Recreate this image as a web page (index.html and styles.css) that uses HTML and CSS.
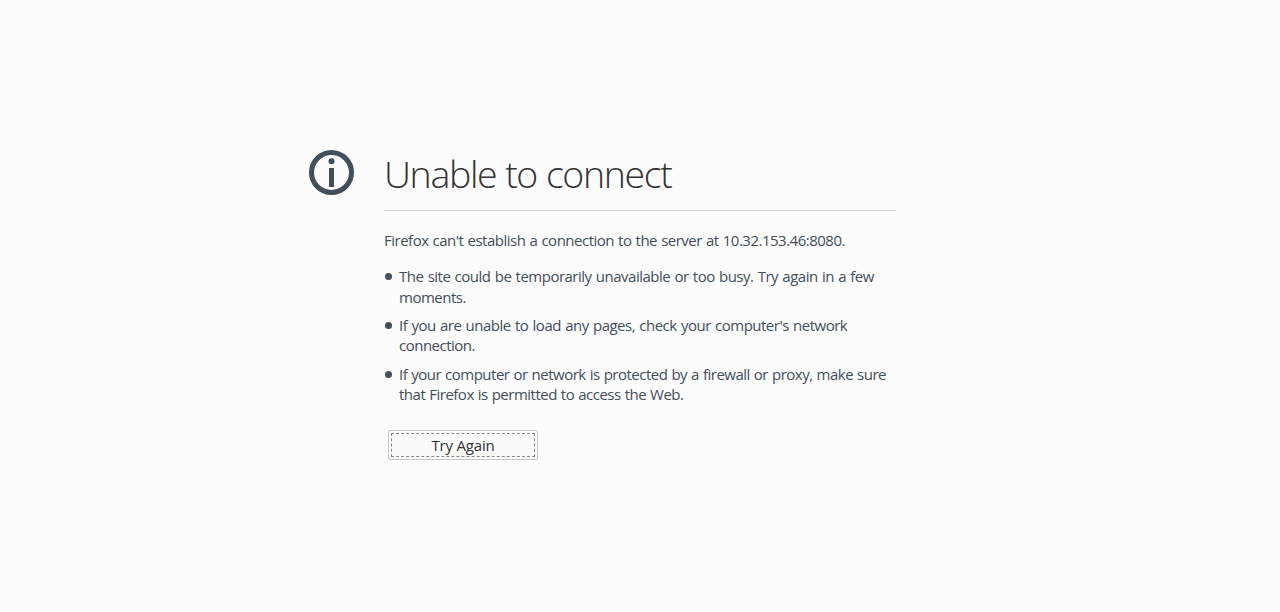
FILE: index.html
```html
<!DOCTYPE html>
<html lang="en">
<head>
<meta charset="utf-8">
<title>Problem loading page</title>
<link rel="stylesheet" href="styles.css">
</head>
<body>
<main class="container">
  <svg class="info-icon" viewBox="0 0 46 46" aria-hidden="true">
    <circle cx="23.5" cy="22.5" r="20" fill="none" stroke="currentColor" stroke-width="5"/>
    <circle cx="23.5" cy="11.3" r="3" fill="currentColor"/>
    <rect x="21" y="18" width="5" height="19" fill="currentColor"/>
  </svg>
  <div class="content">
    <h1 class="title">Unable to connect</h1>
    <p class="description">Firefox can't establish a connection to the server at 10.32.153.46:8080.</p>
    <ul class="hints">
      <li class="hint hint-site">The site could be temporarily unavailable or too busy. Try again in a few<br>moments.</li>
      <li class="hint hint-network">If you are unable to load any pages, check your computer's network<br>connection.</li>
      <li class="hint">If your computer or network is protected by a firewall or proxy, make sure<br>that Firefox is permitted to access the Web.</li>
    </ul>
    <button class="retry" type="button"><span class="retry-label">Try Again</span></button>
  </div>
</main>
</body>
</html>
```
FILE: styles.css
```css
body {
  margin: 0;
  min-height: 612px;
  background: #fcfcfc;
  color: #424e5a;
  font: 15px/20.4px "Open Sans", "Noto Sans", sans-serif;
}
.container {
  display: flex;
  width: 588px;
  padding: 150px 0 0 308px;
}
.info-icon {
  flex: none;
  width: 46px;
  height: 46px;
  margin-right: 30px;
}
.content { width: 512px; }
.title {
  margin: 0;
  height: 60px;
  border-bottom: 1px solid #d0d0d0;
  color: #333;
  font-size: 37.5px;
  font-weight: 300;
  letter-spacing: -1.35px;
  word-spacing: 0.5px;
  line-height: 48px;
  white-space: nowrap;
}
.description {
  margin: 19px 0 15.8px;
  letter-spacing: -0.5px;
  word-spacing: 0.7px;
  white-space: nowrap;
}
.hints { margin: 0; padding: 0; list-style: none; }
.hint {
  position: relative;
  margin-bottom: 8px;
  padding-left: 15px;
  letter-spacing: -0.5px;
  word-spacing: 0.6px;
  white-space: nowrap;
}
.hint-site,
.hint-network { word-spacing: 0.85px; }
.hint::before {
  content: "";
  position: absolute;
  top: 7px;
  left: 1px;
  width: 7px;
  height: 7px;
  border-radius: 50%;
  background: currentColor;
}
.retry {
  display: block;
  width: 150px;
  height: 30px;
  margin: 25.2px 0 0 4px;
  padding: 2px;
  border: 1px solid #c8c8c8;
  border-radius: 2px;
  background: #fbfbfb;
  color: #333;
  font: inherit;
  letter-spacing: -0.2px;
}
.retry-label {
  display: block;
  height: 22px;
  border: 1px dashed #888;
  line-height: 22px;
}
```
